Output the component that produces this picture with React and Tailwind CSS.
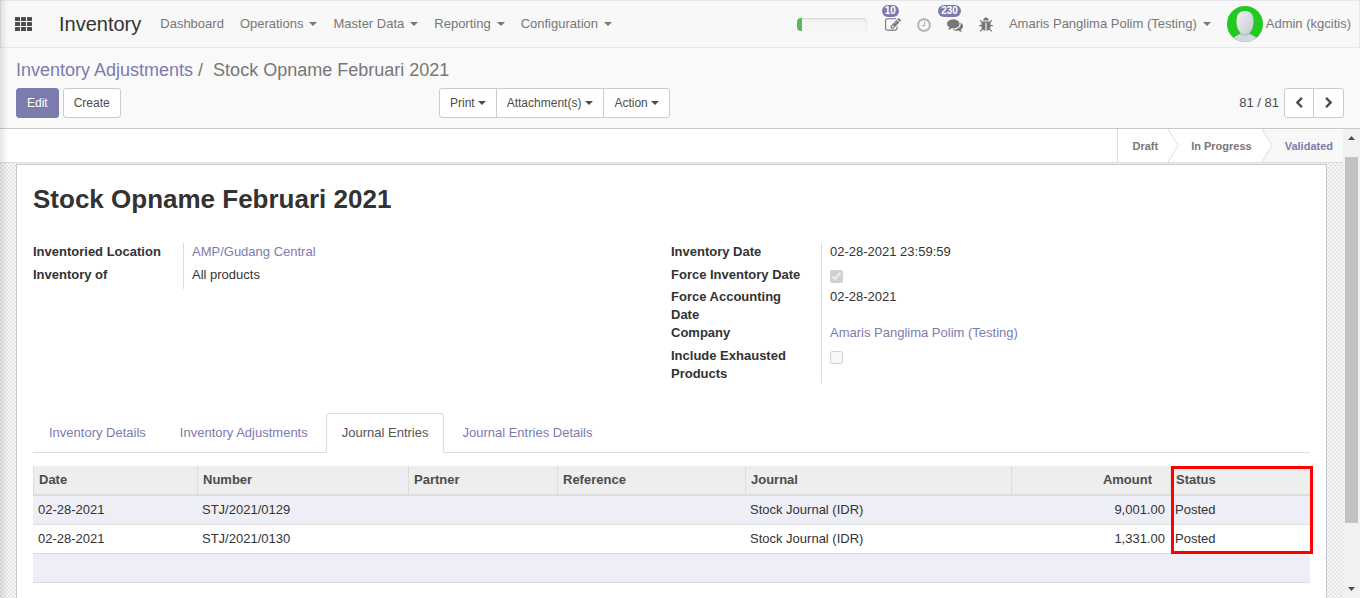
import React from "react";

const ICONS = {
  edit: "M888 1184l116-116-152-152-116 116v56h96v96h56zm440-720q-16-16-33 1l-350 350q-17 17-1 33t33-1l350-350q17-17 1-33zm80 594v190q0 119-84.5 203.5t-203.5 84.5h-832q-119 0-203.5-84.5t-84.5-203.5v-832q0-119 84.5-203.5t203.5-84.5h832q63 0 117 25 15 7 18 23 3 17-9 29l-49 49q-14 14-32 8-23-6-45-6h-832q-66 0-113 47t-47 113v832q0 66 47 113t113 47h832q66 0 113-47t47-113v-126q0-13 9-22l64-64q15-15 35-7t20 29zm-96-738l288 288-672 672h-288v-288zm444 132l-92 92-288-288 92-92q28-28 68-28t68 28l152 152q28 28 28 68t-28 68z",
  clock: "M1024 544v448q0 14-9 23t-23 9h-320q-14 0-23-9t-9-23v-64q0-14 9-23t23-9h224v-352q0-14 9-23t23-9h64q14 0 23 9t9 23zm416 352q0-148-73-273t-198-198-273-73-273 73-198 198-73 273 73 273 198 198 273 73 273-73 198-198 73-273zm224 0q0 209-103 385.5t-279.5 279.5-385.5 103-385.5-103-279.5-279.5-103-385.5 103-385.5 279.5-279.5 385.5-103 385.5 103 279.5 279.5 103 385.5z",
  comments: "M1408 768q0 139-94 257t-256.5 186.5-353.5 68.5q-86 0-176-16-124 88-278 128-36 9-86 16h-3q-11 0-20.5-8t-11.5-21q-1-3-1-6.5t.5-6.5 2-6l2.5-5 3.5-5.5 4-5 4.5-5 4-4.5q5-6 23-25t26-29.5 22.5-29 25-38.5 20.5-44q-124-72-195-177t-71-224q0-139 94-257t256.5-186.5 353.5-68.5 353.5 68.5 256.5 186.5 94 257zm384 256q0 120-71 224.5t-195 176.5q10 24 20.5 44t25 38.5 22.5 29 26 29.5 23 25q1 1 4 4.5t4.5 5 4 5 3.5 5.5l2.5 5 2 6 .5 6.5-1 6.5q-3 14-13 22t-22 7q-50-7-86-16-154-40-278-128-90 16-176 16-271 0-472-132 58 4 88 4 161 0 309-45t264-129q125-92 192-212t67-254q0-77-23-152 129 71 204 178t75 230z",
  bug: "M1696 960q0 26-19 45t-45 19h-224q0 171-67 290l208 209q19 19 19 45t-19 45q-18 19-45 19t-45-19l-198-197q-5 5-15 13t-42 28.5-65 36.5-82 29-97 13v-896h-128v896q-51 0-101.5-13.5t-87-33-66-39-43.5-32.5l-15-14-183 207q-20 21-48 21-24 0-43-16-19-18-20.5-44.5t15.5-46.5l202-227q-58-114-58-274h-224q-26 0-45-19t-19-45 19-45 45-19h224v-294l-173-173q-19-19-19-45t19-45 45-19 45 19l173 173h844l173-173q19-19 45-19t45 19 19 45-19 45l-173 173v294h224q26 0 45 19t19 45zm-480-576h-640q0-133 93.5-226.5t226.5-93.5 226.5 93.5 93.5 226.5z",
  left: "M1427 301l-531 531 531 531q19 19 19 45t-19 45l-166 166q-19 19-45 19t-45-19l-742-742q-19-19-19-45t19-45l742-742q19-19 45-19t45 19l166 166q19 19 19 45t-19 45z",
  right: "M1363 877l-742 742q-19 19-45 19t-45-19l-166-166q-19-19-19-45t19-45l531-531-531-531q-19-19-19-45t19-45l166-166q19-19 45-19t45 19l742 742q19 19 19 45t-19 45z",
};

function Icon({ name, className }) {
  return (
    <svg viewBox="0 0 1792 1792" fill="currentColor" aria-hidden="true" className={className}>
      <path d={ICONS[name]} />
    </svg>
  );
}

function Caret() {
  return (
    <svg viewBox="0 0 8 4" fill="currentColor" aria-hidden="true" className="h-1 w-2">
      <path d="M0 0h8L4 4z" />
    </svg>
  );
}

function AppsIcon() {
  return (
    <svg viewBox="0 0 17 14" fill="currentColor" aria-hidden="true" className="h-[14px] w-[17px]">
      {[0, 6, 12].map((x) =>
        [0, 5, 10].map((y) => <rect key={x + "-" + y} x={x} y={y} width="5" height="4" rx="0.5" />)
      )}
    </svg>
  );
}

function Avatar() {
  return (
    <svg viewBox="0 0 36 36" aria-hidden="true" className="size-9">
      <defs>
        <clipPath id="avatar-clip"><circle cx="18" cy="18" r="18" /></clipPath>
        <linearGradient id="avatar-face" x1="0" y1="0" x2="1" y2="1">
          <stop offset="0" stopColor="#f2f3f5" />
          <stop offset="1" stopColor="#c3c7d0" />
        </linearGradient>
      </defs>
      <g clipPath="url(#avatar-clip)">
        <rect width="36" height="36" fill="#21c921" />
        <path d="M5 36C6 31 9 30 13 28h10c4 2 7 3 9 8z" fill="#d3d7de" />
        <path d="M13 24h10v4q-5 3-10 0z" fill="#aeb4bf" />
        <path d="M18 5c6 0 8.500 4 8.500 10.500C26.500 23 23 28.500 18 28.500S9.500 23 9.500 15.500C9.500 9 12 5 18 5z" fill="url(#avatar-face)" />
      </g>
    </svg>
  );
}

function Badge({ children }) {
  return (
    <span className="absolute right-[2px] bottom-4 rounded-full bg-[#7c7bad] px-[3px] text-[10px] leading-[12px] font-bold text-white">
      {children}
    </span>
  );
}

function NavMenu({ children }) {
  return (
    <button type="button" className="flex items-center gap-[6px]">
      {children}
      <Caret />
    </button>
  );
}

function Navbar() {
  return (
    <header className="flex h-12 shrink-0 items-center border border-[#e7e7e7] bg-[#f8f8f8] pr-2 text-[#777]">
      <button type="button" aria-label="Apps" className="ml-[14px] text-[#4c4c4c]"><AppsIcon /></button>
      <h1 className="ml-[27px] text-[20px] leading-6 text-[#333]">Inventory</h1>
      <nav className="ml-[19px] flex items-center gap-4">
        <a href="#dashboard">Dashboard</a>
        <NavMenu>Operations</NavMenu>
        <NavMenu>Master Data</NavMenu>
        <NavMenu>Reporting</NavMenu>
        <NavMenu>Configuration</NavMenu>
      </nav>
      <div className="ml-auto flex items-center">
        <div role="progressbar" aria-label="Progress" aria-valuenow={7} aria-valuemin={0} aria-valuemax={100} className="mr-[18px] h-[13px] w-[70px] overflow-hidden rounded-[4px] bg-[#f5f5f5] shadow-[inset_0_1px_2px_rgba(0,0,0,0.15)]">
          <div className="h-full w-[7%] bg-[#5cb85c]" />
        </div>
        <div className="flex items-center gap-[15px] pt-[2px]">
          <button type="button" aria-label="Activities" className="relative"><Icon name="edit" className="size-4" /><Badge>10</Badge></button>
          <button type="button" aria-label="Recent" className="text-[#b5b5b5]"><Icon name="clock" className="size-4" /></button>
          <button type="button" aria-label="Messages" className="relative"><Icon name="comments" className="size-4" /><Badge>230</Badge></button>
          <button type="button" aria-label="Debug"><Icon name="bug" className="size-4" /></button>
        </div>
        <div className="ml-[15px]"><NavMenu>Amaris Panglima Polim (Testing)</NavMenu></div>
        <button type="button" className="ml-4 flex items-center gap-[3px]"><Avatar />Admin (kgcitis)</button>
      </div>
    </header>
  );
}

function ControlPanel() {
  return (
    <section className="shrink-0 border-b border-[#c8c8c8] bg-[#f9f9f9] px-4 pt-[11px] pb-[10px]">
      <div className="flex h-[22px] items-center text-[18px] text-[#777]">
        <a href="#adjustments" className="text-[#7c7bad]">Inventory Adjustments</a>
        <span className="px-[5px]">/</span>
        <span className="pl-[5px]">Stock Opname Februari 2021</span>
      </div>
      <div className="mt-[7px] grid grid-cols-[423px_1fr_auto] items-center text-[12px] text-[#4c4c4c]">
        <div className="flex gap-1">
          <button type="button" className="h-[30px] rounded-[3px] border border-[#7c7bad] bg-[#7c7bad] px-[10px] text-white">Edit</button>
          <button type="button" className="h-[30px] rounded-[3px] border border-[#ccc] bg-white px-[10px]">Create</button>
        </div>
        <div className="flex">
          <button type="button" className="flex h-[30px] items-center gap-[3px] rounded-l-[3px] border border-[#ccc] bg-white px-[10px]">Print<Caret /></button>
          <button type="button" className="-ml-px flex h-[30px] items-center gap-[4px] border border-[#ccc] bg-white px-[10px]">Attachment(s)<Caret /></button>
          <button type="button" className="-ml-px flex h-[30px] items-center gap-[3px] rounded-r-[3px] border border-[#ccc] bg-white px-[10px]">Action<Caret /></button>
        </div>
        <div className="flex items-center">
          <span className="mr-[5px] text-[13px]">81 / 81</span>
          <button type="button" aria-label="Previous" className="flex h-[30px] w-[30px] items-center justify-center rounded-l-[3px] border border-[#ccc] bg-white"><Icon name="left" className="size-3" /></button>
          <button type="button" aria-label="Next" className="-ml-px flex h-[30px] w-[31px] items-center justify-center rounded-r-[3px] border border-[#ccc] bg-white"><Icon name="right" className="size-3" /></button>
        </div>
      </div>
    </section>
  );
}

function Arrow({ fill }) {
  return (
    <svg viewBox="0 0 11 33" aria-hidden="true" className="h-[33px] w-[11px]">
      <path d="M0 0L10 16.500L0 33H11V0z" fill={fill} />
      <path d="M0 0L10 16.500L0 33" fill="none" stroke="#ddd" />
    </svg>
  );
}

function StatusBar() {
  return (
    <div className="flex h-[34px] justify-end border-b border-[#ddd] bg-white text-[11px] leading-[34px] font-bold text-[#777]">
      <span className="border-l border-[#ddd] pr-[10px] pl-[15px]">Draft</span>
      <Arrow fill="#fff" />
      <span className="pr-[10px] pl-3">In Progress</span>
      <Arrow fill="#f8f8f8" />
      <span className="bg-[#f8f8f8] pr-[10px] pl-3 text-[#7c7bad]">Validated</span>
    </div>
  );
}

function Field({ label, htmlFor, className, children }) {
  const labelClass = "w-[151px] shrink-0 border-r border-[#ddd] font-bold " + className;
  return (
    <div className="flex">
      {htmlFor ? <label htmlFor={htmlFor} className={labelClass}>{label}</label> : <span className={labelClass}>{label}</span>}
      <div className="w-0 grow pl-2">{children}</div>
    </div>
  );
}

function Fields() {
  return (
    <div className="mt-7 grid grid-cols-2 items-start pr-px leading-[18px]">
      <div>
        <Field label="Inventoried Location" className="pb-[5px]"><a href="#location" className="text-[#7c7bad]">AMP/Gudang Central</a></Field>
        <Field label="Inventory of" className="pb-[5px]">All products</Field>
      </div>
      <div>
        <Field label="Inventory Date" className="pb-[5px]">02-28-2021 23:59:59</Field>
        <Field label="Force Inventory Date" htmlFor="force-date" className="pb-1">
          <input id="force-date" type="checkbox" disabled defaultChecked className="mt-1 block size-[13px]" />
        </Field>
        <Field label="Force Accounting Date" className="pr-6">02-28-2021</Field>
        <Field label="Company" className="pb-[5px]"><a href="#company" className="text-[#7c7bad]">Amaris Panglima Polim (Testing)</a></Field>
        <Field label="Include Exhausted Products" htmlFor="exhausted" className="pr-6">
          <input id="exhausted" type="checkbox" disabled className="mt-1 block size-[13px]" />
        </Field>
      </div>
    </div>
  );
}

function Tabs() {
  const tabs = ["Inventory Details", "Inventory Adjustments", "Journal Entries", "Journal Entries Details"];
  return (
    <div role="tablist" className="mt-[30px] flex gap-[2px] border-b border-[#ddd] leading-[18px]">
      {tabs.map((tab) => {
        const active = tab === "Journal Entries";
        return (
          <button
            key={tab}
            type="button"
            role="tab"
            aria-selected={active}
            className={
              active
                ? "-mb-px rounded-t-[4px] border border-[#ddd] border-b-white bg-white px-[15px] py-[10px] text-[#555]"
                : "-mb-px border border-transparent px-[15px] py-[10px] text-[#7c7bad]"
            }
          >
            {tab}
          </button>
        );
      })}
    </div>
  );
}

const ROWS = [
  ["02-28-2021", "STJ/2021/0129", "", "", "Stock Journal (IDR)", "9,001.00", "Posted"],
  ["02-28-2021", "STJ/2021/0130", "", "", "Stock Journal (IDR)", "1,331.00", "Posted"],
  ["", "", "", "", "", "", ""],
];
const HEADERS = ["Date", "Number", "Partner", "Reference", "Journal", "Amount", "Status"];

function Entries() {
  return (
    <div className="relative mt-[13px]">
      <table className="w-full table-fixed border-separate border-spacing-0">
        <colgroup>
          <col className="w-[164px]" />
          <col className="w-[211px]" />
          <col className="w-[149px]" />
          <col className="w-[188px]" />
          <col />
          <col className="w-[159px]" />
          <col className="w-[140px]" />
        </colgroup>
        <thead className="bg-[#eee] text-[#4c4c4c]">
          <tr className="h-[30px]">
            {HEADERS.map((h) => (
              <th key={h} className={h === "Amount" ? "border-b-2 border-l border-[#ddd] pr-[18px] pl-[5px] text-right" : "border-b-2 border-l border-[#ddd] px-[5px] text-left"}>
                {h}
              </th>
            ))}
          </tr>
        </thead>
        <tbody>
          {ROWS.map((row, r) => (
            <tr key={r} className="h-[29px] odd:bg-[#eeeef7]">
              {row.map((cell, c) => (
                <td key={c} className={c === 5 ? "border-b border-[#ddd] px-[5px] text-right" : "border-b border-[#ddd] px-[5px]"}>
                  {cell}
                </td>
              ))}
            </tr>
          ))}
        </tbody>
      </table>
      <div className="pointer-events-none absolute top-0 -right-[3px] h-[88px] w-[142px] border-[3px] border-[#f00]" />
    </div>
  );
}

function Scrollbar() {
  return (
    <div aria-hidden="true" className="flex w-[17px] shrink-0 flex-col items-center bg-[#f1f1f1] text-[#505050]">
      <svg viewBox="0 0 7 4" fill="currentColor" className="mt-[7px] mb-[17px] h-1 w-[7px]"><path d="M0 4h7L3.500 0z" /></svg>
      <div className="h-[78%] w-[13px] bg-[#c1c1c1]" />
      <svg viewBox="0 0 7 4" fill="currentColor" className="mt-auto mb-[7px] h-1 w-[7px]"><path d="M0 0h7L3.500 4z" /></svg>
    </div>
  );
}

export default function App() {
  return (
    <div className="relative flex h-screen flex-col overflow-hidden font-['Liberation_Sans',Arial,sans-serif] text-[13px] leading-[18px] text-[#333]">
      <Navbar />
      <ControlPanel />
      <div className="flex min-h-0 grow">
        <main className="flex min-w-0 grow flex-col overflow-hidden bg-[#f4f4f4] bg-[repeating-conic-gradient(#e6e6e6_0_25%,#f6f6f6_0_50%)] bg-[length:4px_4px]">
          <StatusBar />
          <div className="mx-4 mt-px grow border border-b-0 border-[#c8c8d3] bg-white px-4">
            <h2 className="mt-[18px] text-[26px] leading-8 font-bold">Stock Opname Februari 2021</h2>
            <Fields />
            <Tabs />
            <Entries />
          </div>
        </main>
        <Scrollbar />
      </div>
      <div className="pointer-events-none absolute inset-y-0 left-0 w-2 bg-linear-to-r from-black/10 to-transparent" />
    </div>
  );
}
